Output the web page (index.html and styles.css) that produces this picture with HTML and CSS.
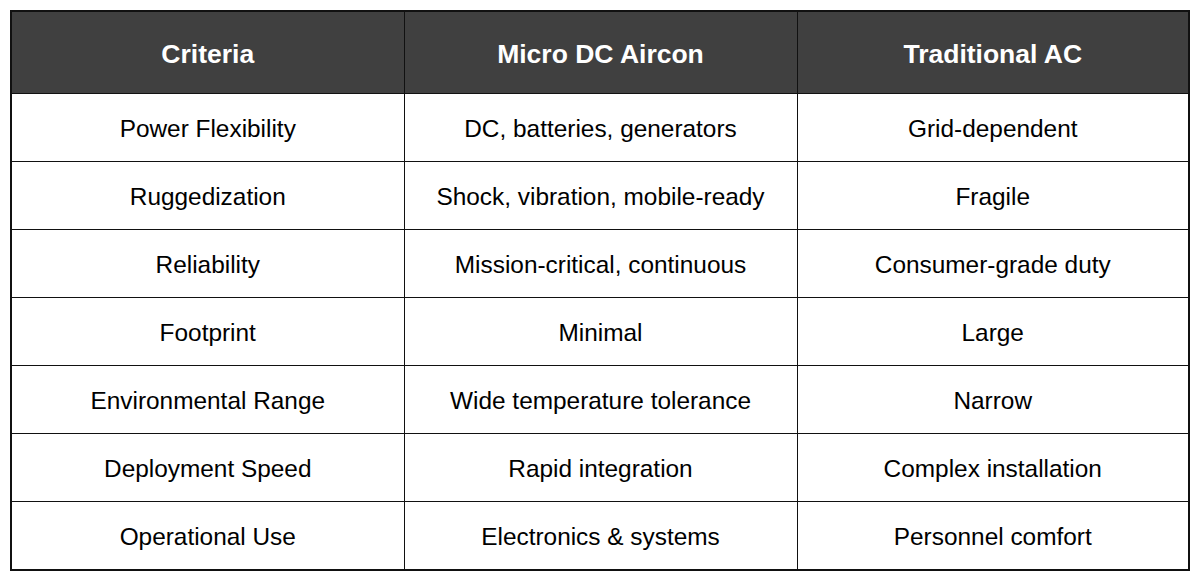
FILE: index.html
```html
<!DOCTYPE html>
<html>
<head>
<meta charset="utf-8">
<link rel="stylesheet" href="styles.css">
</head>
<body>
<div class="frame">
<table class="cmp">
<colgroup><col class="c1"><col class="c2"><col class="c3"></colgroup>
<thead>
<tr><th>Criteria</th><th>Micro DC Aircon</th><th>Traditional AC</th></tr>
</thead>
<tbody>
<tr><td>Power Flexibility</td><td>DC, batteries, generators</td><td>Grid-dependent</td></tr>
<tr><td>Ruggedization</td><td>Shock, vibration, mobile-ready</td><td>Fragile</td></tr>
<tr><td>Reliability</td><td>Mission-critical, continuous</td><td>Consumer-grade duty</td></tr>
<tr><td>Footprint</td><td>Minimal</td><td>Large</td></tr>
<tr><td>Environmental Range</td><td>Wide temperature tolerance</td><td>Narrow</td></tr>
<tr><td>Deployment Speed</td><td>Rapid integration</td><td>Complex installation</td></tr>
<tr><td>Operational Use</td><td>Electronics &amp; systems</td><td>Personnel comfort</td></tr>
</tbody>
</table>
</div>
</body>
</html>
```

FILE: styles.css
```css
html, body {
  margin: 0;
  padding: 0;
  background: #ffffff;
}
body {
  padding: 10px;
  font-family: "Liberation Sans", Arial, sans-serif;
}
.frame {
  width: 1176px;
  border: 2px solid #111;
}
.cmp {
  width: 100%;
  border-collapse: collapse;
  table-layout: fixed;
}
.c1 { width: 392px; }
.c2 { width: 393px; }
.c3 { width: auto; }
.cmp th, .cmp td {
  text-align: center;
  vertical-align: middle;
  border: 1px solid #111;
}
.cmp tr > :first-child { border-left: none; }
.cmp tr > :last-child { border-right: none; }
.cmp thead th { border-top: none; }
.cmp tbody tr:last-child td { border-bottom: none; }
.cmp th {
  background: #404040;
  color: #ffffff;
  font-weight: bold;
  font-size: 26.5px;
  height: 78px;
  padding: 3px 0 0 0;
}
.cmp td {
  color: #000;
  font-size: 24.4px;
  height: 65px;
  padding: 2px 0 0 0;
}
```
